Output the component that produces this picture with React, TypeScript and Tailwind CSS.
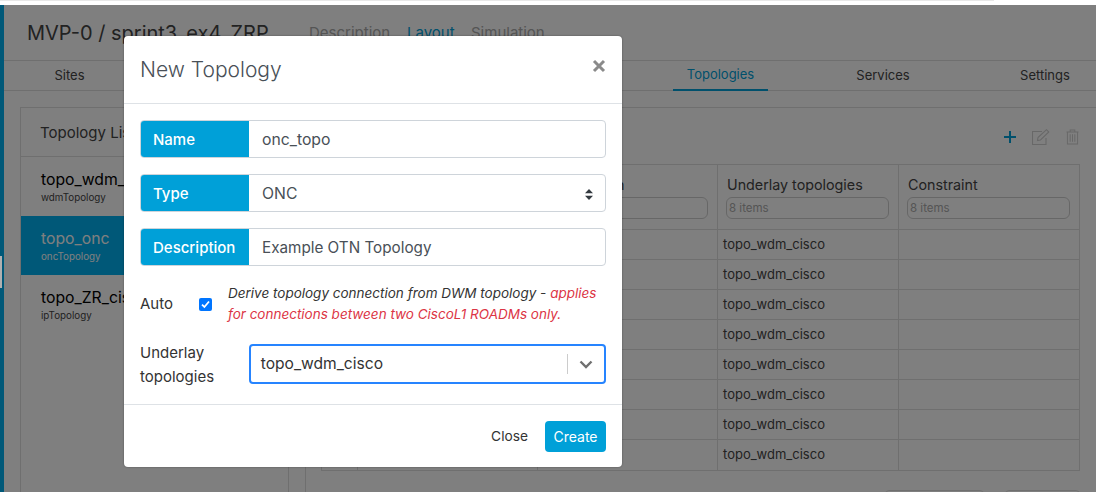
import React from 'react';

const rows = Array.from({ length: 8 }, () => 'topo_wdm_cisco');

const topologies = [
  { name: 'topo_wdm_cisco', type: 'wdmTopology', selected: false },
  { name: 'topo_onc', type: 'oncTopology', selected: true },
  { name: 'topo_ZR_cisco', type: 'ipTopology', selected: false }
];

function FieldRow({ label, children }: { label: string; children: React.ReactNode }) {
  return (
    <div className="flex h-[38px] rounded border border-[#ced4da] overflow-hidden">
      <div className="w-[109px] shrink-0 -my-px -ml-px pt-[2px] bg-[#00a0d8] text-white text-[15px] font-medium flex items-center pl-[13px]">
        {label}
      </div>
      <div className="flex-1 flex items-center justify-between pt-[2px] pl-[13px] pr-[12px] text-[#495057] text-[15.75px]">
        {children}
      </div>
    </div>
  );
}

function Page() {
  return (
    <div className="flex h-[487px] overflow-hidden">
      <div className="w-[4px] shrink-0 bg-[#00b0f0]" />
      <div className="flex-1 min-w-0 flex flex-col">
        <div className="h-[56px] shrink-0 flex items-center pl-[23px] border-b border-[#dfdfdf]">
          <div className="w-[282px] text-[20px] text-[#444444]">MVP-0 / sprint3_ex4_ZRP</div>
          <div className="flex pt-[2px] text-[15px] text-[#aaaaaa]">
            <span className="w-[98px]">Description</span>
            <span className="w-[64px] text-[#00a0d8]">Layout</span>
            <span>Simulation</span>
          </div>
        </div>
        <div className="h-[30px] shrink-0 flex text-[13px] text-[#444444] border-b border-[#dfdfdf]">
          <div className="w-[131px] flex items-center justify-center">Sites</div>
          <div className="w-[538px]" />
          <div className="w-[95px] flex items-center justify-center text-[#00a0d8] border-b-2 border-[#00a0d8] h-[30px]">Topologies</div>
          <div className="w-[230px] flex items-center justify-center">Services</div>
          <div className="w-[94px] flex items-center justify-center">Settings</div>
        </div>
        <div className="flex-1 min-h-0 flex pt-[16px] pl-[16px] gap-[16px]">
          <div className="w-[269px] shrink-0 border border-[#dfdfdf] border-b-0">
            <div className="h-[49px] flex items-center pl-[19px] pt-[2px] text-[15px] text-[#444444] border-b border-[#dfdfdf]">Topology List</div>
            {topologies.map((t) => (
              <div
                key={t.name}
                className={`h-[59px] pl-[20px] pt-[2px] flex flex-col justify-center ${t.selected ? 'bg-[#00b0f0] text-white' : 'text-black'}`}
              >
                <div className="text-[15.75px] leading-[20px]">{t.name}</div>
                <div className={`text-[9.8px] leading-[15px] ${t.selected ? 'text-white' : 'text-[#444444]'}`}>{t.type}</div>
              </div>
            ))}
          </div>
          <div className="flex-1 min-w-0 border border-[#dfdfdf] border-r-0 border-b-0 pl-[15px] pr-[16px]">
            <div className="h-[56px] flex items-center justify-end gap-[16px] pt-[1px] pr-[1px]">
              <svg width="12" height="12" viewBox="0 0 12 12" fill="none" stroke="#00a0d8" strokeWidth="2"><path d="M6 0v12M0 6h12" /></svg>
              <svg width="18" height="16" viewBox="0 0 18 16" fill="none" stroke="#d0d0d0" strokeWidth="1.100"><path d="M14 9v6.500H.5V2.500H10" /><path d="M6 8.500 14.500.700l2.300 2.300L8.500 11 5.500 11.500Z" /></svg>
              <svg width="13" height="16" viewBox="0 0 14 16" fill="none" stroke="#d0d0d0" strokeWidth="1.100"><path d="M.5 2.500h13M4.500 2.500V.5h5v2M1.500 2.500v13h11v-13M4.500 5v8M7 5v8M9.500 5v8" /></svg>
            </div>
            <div className="border border-[#dfdfdf] text-[13px] text-[#444444]">
              <div className="grid grid-cols-[35px_180px_180px_181px_181px] h-[65px] border-b border-[#dfdfdf]">
                <div />
                <div className="border-l border-[#dfdfdf]" />
                {['Description', 'Underlay topologies', 'Constraint'].map((h) => (
                  <div key={h} className="border-l border-[#dfdfdf] pl-[8px] pr-[9px] pt-[11px]">
                    <div className="text-[14.3px] leading-[18px] pl-px">{h}</div>
                    <div className="mt-[3px] h-[22px] rounded-md border border-[#cfcfcf] pl-[2px] text-[11.5px] leading-[20px] text-[#aaaaaa]">8 items</div>
                  </div>
                ))}
              </div>
              {rows.map((r, i) => (
                <div key={i} className={`grid grid-cols-[35px_180px_180px_181px_181px] h-[30px] ${i < 7 ? 'border-b border-[#dfdfdf]' : ''}`}>
                  <div />
                  <div className="border-l border-[#dfdfdf]" />
                  <div className="border-l border-[#dfdfdf]" />
                  <div className="border-l border-[#dfdfdf] pl-[5px] leading-[29px]">{r}</div>
                  <div className="border-l border-[#dfdfdf]" />
                </div>
              ))}
            </div>
            <div className="flex justify-end gap-[21px] mt-[19px]">
              <div className="w-[99px] h-[30px] border border-[#dfdfdf] rounded-sm" />
              <div className="w-[75px] h-[30px] border border-[#dfdfdf] rounded-sm" />
            </div>
          </div>
        </div>
      </div>
    </div>
  );
}

function Modal() {
  return (
    <div className="absolute left-[124px] top-[31px] w-[498px] h-[431px] bg-white rounded flex flex-col shadow-[0_0_2px_rgba(0,0,0,0.4)]">
      <div className="h-[68px] shrink-0 flex items-center justify-between pl-[16px] pr-[16px] border-b border-[#dee2e6]">
        <h2 className="text-[21px] font-light text-[#495057]">New Topology</h2>
        <svg className="mb-[8px]" width="14" height="14" viewBox="0 0 14 14" stroke="#8a8a8a" strokeWidth="3"><path d="M2 2l10 10M12 2 2 12" /></svg>
      </div>
      <div className="flex-1 flex flex-col px-[16px] pt-[16px]">
        <div className="flex flex-col gap-[16px]">
          <FieldRow label="Name">onc_topo</FieldRow>
          <FieldRow label="Type">
            <span>ONC</span>
            <svg width="8" height="11" viewBox="0 0 8 11" fill="#343a40"><path d="M4 0 8 4.200H0ZM4 11 0 6.800h8Z" /></svg>
          </FieldRow>
          <FieldRow label="Description"><span className="text-[15.25px]">Example OTN Topology</span></FieldRow>
        </div>
        <div className="flex items-center mt-[17px] h-[42px]">
          <span className="w-[59px] text-[15px] text-[#333333]">Auto</span>
          <div className="w-[13px] h-[13px] rounded-[2px] bg-[#0075ff] flex items-center justify-center">
            <svg width="9" height="9" viewBox="0 0 9 9" fill="none" stroke="white" strokeWidth="1.800"><path d="M1 4.700 3.400 7 8 1.500" /></svg>
          </div>
          <p className="ml-[16px] w-[378px] italic text-[13.5px] leading-[21px] text-[#333333]">
            Derive topology connection from DWM topology - <span className="text-[#dc3545]">applies for connections between two CiscoL1 ROADMs only.</span>
          </p>
        </div>
        <div className="flex mt-[19px]">
          <div className="w-[109px] text-[15px] leading-[24px] text-[#333333] -mt-[3px]">Underlay<br />topologies</div>
          <div className="w-[358px] h-[40px] rounded border-2 border-[#2684ff] flex items-center pl-[10px] text-[15.6px] text-[#333333]">
            <span className="flex-1">topo_wdm_cisco</span>
            <div className="w-px h-[20px] bg-[#cccccc]" />
            <svg className="ml-[11px] mr-[11px]" width="14" height="14" viewBox="0 0 14 14" fill="none" stroke="#707070" strokeWidth="2.400"><path d="M1.500 4.500 7 10l5.500-5.500" /></svg>
          </div>
        </div>
      </div>
      <div className="h-[63px] shrink-0 flex items-center justify-end border-t border-[#dee2e6] pr-[16px] pt-[1px] gap-[17px] text-[14px]">
        <span className="text-[#333333] text-[13.75px]">Close</span>
        <div className="w-[61px] h-[31px] rounded bg-[#00a0d8] text-white flex items-center justify-center">Create</div>
      </div>
    </div>
  );
}

export default function App() {
  return (
    <div className="relative w-[1096px] h-[492px] overflow-hidden bg-white font-['Inter',sans-serif]">
      <div className="h-[5px] bg-white">
        <div className="h-px w-[994px] bg-[#e8e8e8]" />
      </div>
      <Page />
      <div className="absolute inset-x-0 top-[5px] bottom-0 bg-black/50">
        <div className="absolute left-0 top-[251px] w-[2px] h-[32px] bg-[#b0b0b0]" />
        <Modal />
      </div>
    </div>
  );
}
